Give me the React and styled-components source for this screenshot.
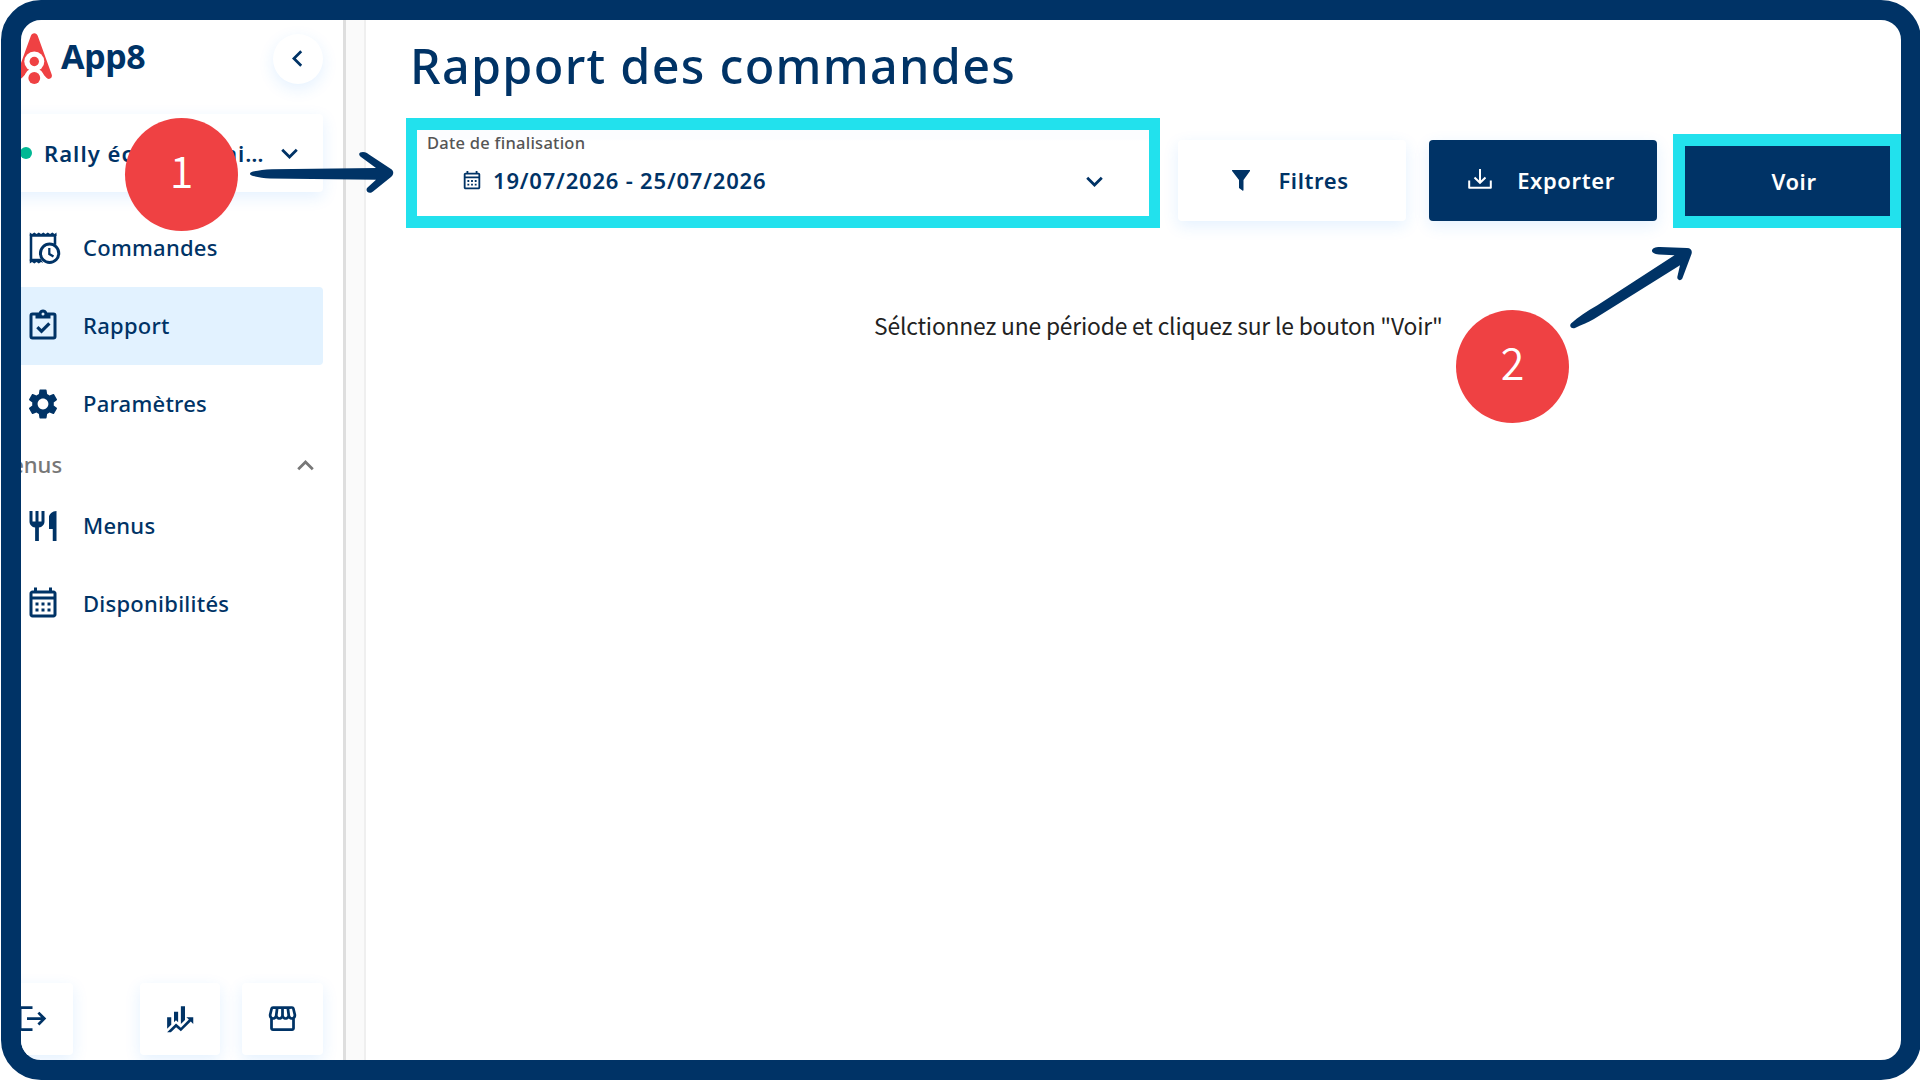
import styled, { createGlobalStyle, css } from "styled-components";
import {
    MdKeyboardArrowDown,
    MdKeyboardArrowLeft,
    MdKeyboardArrowUp,
    MdLogout,
    MdOutlineStorefront,
    MdRestaurant,
    MdSettings,
} from "react-icons/md";

const navy = "#003366";
const cyan = "#22e1ed";
const red = "#ef4143";
const softShadow = "0 5px 16px rgba(30, 140, 255, 0.12)";

const Global = createGlobalStyle`
    *{
        box-sizing: border-box;
    }

    body{
        margin: 0;
        background-color: white;
        color: ${navy};
        font-family: "Noto Sans", sans-serif;
        overflow: hidden;
    }

    svg{
        display: block;
        flex-shrink: 0;
    }
`;

const Page = styled.div`
    position: relative;
    width: 1920px;
    height: 1080px;
    padding-left: 1px;
    overflow: hidden;
`;

const Frame = styled.div`
    display: flex;
    width: 1920px;
    height: 1080px;
    border: 20px solid ${navy};
    border-radius: 40px;
    overflow: hidden;
`;

const Sidebar = styled.aside`
    display: flex;
    flex-direction: column;
    flex-shrink: 0;
    width: 376px;
    margin-left: -51px;
    padding: 11px 20.5px 5px 22px;
    border-right: 3px solid #dedede;
`;

const Gutter = styled.div`
    flex-shrink: 0;
    width: 20px;
    background-color: #fafafa;
    border-right: 2px solid #efefef;
`;

const Brand = styled.div`
    display: flex;
    align-items: center;
    height: 55px;
    margin-bottom: 28px;
    padding-left: 23px;

    h2{
        flex: 1;
        margin: 0 0 5px 7px;
        font-size: 34px;
        line-height: 40px;
        font-weight: 700;
        letter-spacing: -0.4px;
    }
`;

const RoundButton = styled.button`
    display: flex;
    align-items: center;
    justify-content: center;
    width: 50px;
    height: 50px;
    padding: 0 1px 0 0;
    border: none;
    border-radius: 50%;
    background-color: white;
    color: ${navy};
    box-shadow: ${softShadow};
`;

const Store = styled.div`
    display: flex;
    align-items: center;
    height: 78px;
    margin-bottom: 17px;
    padding: 0 17px 0 28px;
    border-radius: 4px;
    box-shadow: ${softShadow};

    .dot{
        width: 12px;
        height: 12px;
        margin-right: 12px;
        border-radius: 50%;
        background-color: #00b894;
    }

    .name{
        flex: 1;
        font-size: 22px;
        font-weight: 600;
        letter-spacing: 1.05px;
        white-space: nowrap;
    }
`;

const NavItem = styled.a`
    display: flex;
    align-items: center;
    height: 78px;
    padding: 0 0 1px 32.5px;
    border-radius: 4px;
    font-size: 22px;
    font-weight: 500;

    span{
        margin: 0 0 2px 22.500px;
        letter-spacing: 0.25px;
    }

    ${(p) => p.$active && css`
        background-color: #e2f2ff;
    `}
`;

const NavGroup = styled.div`
    display: flex;
    align-items: center;
    justify-content: space-between;
    height: 44px;
    padding-right: 1px;
    color: #777;
    font-size: 22px;
    font-weight: 500;

    span{
        margin: 0 0 2px -1px;
    }
`;

const Shortcuts = styled.div`
    display: flex;
    gap: 22px;
    margin-top: auto;
`;

const Shortcut = styled.button`
    display: flex;
    align-items: center;
    justify-content: center;
    width: 80.5px;
    height: 72px;
    padding: 0 0 1px;
    border: none;
    border-radius: 4px;
    background-color: white;
    color: ${navy};
    box-shadow: ${softShadow};

    &:first-child{
        margin-right: auto;
    }
`;

const Main = styled.main`
    flex: 1;
    padding-left: 40px;

    h1{
        margin: 14px 0 21px 4px;
        font-size: 48.5px;
        line-height: 63px;
        font-weight: 500;
        letter-spacing: 1.3px;
    }
`;

const Toolbar = styled.div`
    display: flex;
    align-items: flex-end;
    height: 110px;
`;

const Highlight = styled.div`
    border: solid ${cyan};
    border-width: 12px 11px;
`;

const DateField = styled(Highlight)`
    width: 754px;
    height: 110px;
    margin-right: 18px;
    padding: 2px 38px 0 10px;
    background: linear-gradient(#fcfdff 9px, white 11px);

    label{
        display: block;
        color: #555;
        font-size: 16.5px;
        line-height: 22px;
        font-weight: 500;
        letter-spacing: 0.25px;
    }
`;

const DateValue = styled.div`
    display: flex;
    align-items: center;
    height: 54px;
    padding-left: 34px;

    span{
        flex: 1;
        margin: 0 0 3px 10px;
        font-size: 22px;
        font-weight: 600;
        letter-spacing: 0.8px;
    }
`;

const Button = styled.button`
    display: flex;
    align-items: center;
    justify-content: center;
    width: ${(p) => p.$width}px;
    height: 81px;
    margin: 0 ${(p) => p.$gap}px 7px 0;
    padding: 0 3px 1px 0;
    border: none;
    border-radius: 4px;
    background-color: ${(p) => (p.$primary ? navy : "white")};
    color: ${(p) => (p.$primary ? "white" : navy)};
    box-shadow: ${softShadow};
    font: 600 22px "Noto Sans", sans-serif;
    letter-spacing: 0.6px;
`;

const ViewButton = styled(Highlight)`
    display: flex;
    align-items: center;
    justify-content: center;
    width: 229px;
    height: 94px;
    padding: 0 0 1px 13px;
    border-width: 12px;
    background-color: ${navy};
    color: white;
    font-size: 22px;
    font-weight: 600;
    letter-spacing: 0.6px;
`;

const Message = styled.p`
    margin: 81px 0 0 468px;
    color: #222;
    font-family: "Noto Sans CJK JP", sans-serif;
    font-size: 22.8px;
    line-height: 34px;
    letter-spacing: -0.17px;
    white-space: nowrap;
`;

const Step = styled.div`
    position: absolute;
    left: ${(p) => p.$x}px;
    top: ${(p) => p.$y}px;
    display: flex;
    align-items: center;
    justify-content: center;
    width: 113px;
    height: 113px;
    padding-bottom: 10px;
    border-radius: 50%;
    background-color: ${red};
    color: white;
    font-family: "Noto Sans CJK JP", sans-serif;
    font-size: 43px;
    font-weight: 350;
    line-height: 1;
`;

const Arrows = styled.svg`
    position: absolute;
    left: 0;
    top: 0;
    fill: ${navy};
    pointer-events: none;
`;

const Icon = ({ d, size = 36 }) => (
    <svg width={size} height={size} viewBox="0 0 24 24" fill="currentColor">
        <path d={d} />
    </svg>
)

const paths = {
    clipboard: "M19,3H14.82C14.4,1.84 13.3,1 12,1C10.7,1 9.6,1.84 9.18,3H5A2,2 0 0,0 3,5V19A2,2 0 0,0 5,21H19A2,2 0 0,0 21,19V5A2,2 0 0,0 19,3M12,3A1,1 0 0,1 13,4A1,1 0 0,1 12,5A1,1 0 0,1 11,4A1,1 0 0,1 12,3M7,7H17V5H19V19H5V5H7V7M7.5,13.5L9,12L11,14L15.5,9.5L17,11L11,17L7.5,13.5Z",
    calendar: "M7 11H9V13H7V11M21 5V19C21 20.11 20.11 21 19 21H5C3.89 21 3 20.1 3 19V5C3 3.9 3.9 3 5 3H6V1H8V3H16V1H18V3H19C20.11 3 21 3.9 21 5M5 19H19V9H5V19M5 7H19V5H5V7M15 13V11H17V13H15M11 13V11H13V13H11M7 15H9V17H7V15M15 17V15H17V17H15M11 17V15H13V17H11Z",
    finance: "M6,16.5L3,19.44V11H6M11,14.66L9.43,13.32L8,14.64V7H11M16,13L13,16V3H16M18.81,12.81L17,11H22V16L20.21,14.21L13,21.36L9.53,18.34L5.75,22H3L9.47,15.66L13,18.64",
};

const Logo = () => (
    <svg width="39" height="52" viewBox="0 0 39 52">
        <path fill={red} d="M19.3 0.3c1.7 0 2.8 1 3.4 2.5l14 38.6c1.2 3.6-2.4 5.8-5 3.6L27 40H11.6l-4.7 5c-2.6 2.2-6.2 0-5-3.6L15.9 2.8c.6-1.5 1.7-2.5 3.400-2.500z" />
        <circle cx="19.3" cy="45" r="10" fill="white" />
        <circle cx="19.3" cy="28.5" r="10" fill="white" />
        <circle cx="19.3" cy="28.5" r="4.7" fill={red} />
        <circle cx="19.3" cy="45" r="5.9" fill={red} />
    </svg>
)

const OrdersIcon = () => (
    <svg width="36" height="36" viewBox="0 0 24 24" fill="none" stroke="currentColor">
        <path strokeWidth="1.7" d="M10.5 20H4V3.6h16v6.2" />
        <path fill="currentColor" stroke="none" d="M3.2 4V1.6l1.5 1 1.5-1 1.5 1 1.5-1 1.5 1 1.5-1 1.5 1 1.5-1 1.5 1 1.5-1 1.5 1 1.3-1V4zM3.2 19.5v2.9l1.5-1 1.5 1 1.5-1 1.5 1 1.5-1 1.5.6-1.700-2.500z" />
        <circle cx="16.4" cy="15.5" r="6.1" strokeWidth="2" />
        <path strokeWidth="1.5" d="M16.2 12v4l2.8 1.7" />
    </svg>
)

const Funnel = () => (
    <svg width="18" height="21" viewBox="0 0 18 21" fill="currentColor">
        <path d="M0.6 0h17c.6 0 .7.7.4 1.1L11.5 10v10c0 .8-.6 1-1.1.6L7 18V10L0.1 1.100C-.2.6 0 0 .6 0z" />
    </svg>
)

const Download = () => (
    <svg width="24" height="21" viewBox="0 0 24 21" fill="none" stroke="currentColor" strokeWidth="2">
        <path d="M1.2 11.5V18.7H22.8V11.5" strokeLinejoin="round" />
        <path d="M12 0v13.5M6.5 8.5l5.5 5.3 5.5-5.3" />
    </svg>
)

const IconGap = styled.span`
    display: flex;
    margin: ${(p) => p.$margin};
`;

const App = () => {
    return(
        <Page>
            <Global />
            <Frame>
                <Sidebar>
                    <Brand>
                        <Logo />
                        <h2>App8</h2>
                        <RoundButton><MdKeyboardArrowLeft size={33} /></RoundButton>
                    </Brand>

                    <Store>
                        <div className="dot"></div>
                        <div className="name">Rally école semai…</div>
                        <MdKeyboardArrowDown size={33} />
                    </Store>

                    <NavItem><OrdersIcon /><span>Commandes</span></NavItem>
                    <NavItem $active><Icon d={paths.clipboard} /><span>Rapport</span></NavItem>
                    <NavItem><MdSettings size={36} /><span>Paramètres</span></NavItem>

                    <NavGroup>
                        <span>Menus</span>
                        <MdKeyboardArrowUp size={33} />
                    </NavGroup>

                    <NavItem><MdRestaurant size={36} /><span>Menus</span></NavItem>
                    <NavItem><Icon d={paths.calendar} /><span>Disponibilités</span></NavItem>

                    <Shortcuts>
                        <Shortcut><MdLogout size={33} /></Shortcut>
                        <Shortcut><Icon d={paths.finance} size={33} /></Shortcut>
                        <Shortcut><MdOutlineStorefront size={33} /></Shortcut>
                    </Shortcuts>
                </Sidebar>

                <Gutter />

                <Main>
                    <h1>Rapport des commandes</h1>

                    <Toolbar>
                        <DateField>
                            <label>Date de finalisation</label>
                            <DateValue>
                                <Icon d={paths.calendar} size={22} />
                                <span>19/07/2026 - 25/07/2026</span>
                                <MdKeyboardArrowDown size={33} />
                            </DateValue>
                        </DateField>
                        <Button $width={228} $gap={23}>
                            <IconGap $margin="0 28px 0 0"><Funnel /></IconGap>
                            Filtres
                        </Button>
                        <Button $primary $width={228} $gap={16}>
                            <IconGap $margin="0 25px 2px 0"><Download /></IconGap>
                            Exporter
                        </Button>
                        <ViewButton>Voir</ViewButton>
                    </Toolbar>

                    <Message>Sélctionnez une période et cliquez sur le bouton "Voir"</Message>
                </Main>
            </Frame>

            <Step $x={125} $y={118}>1</Step>
            <Step $x={1456} $y={310}>2</Step>

            <Arrows width="1920" height="1080" viewBox="0 0 1920 1080">
                <path d="M253 171.5C258 170.5 264 169.5 272 169.2L376 168L361 157C357.5 154 359.5 152 363 152C366 152 367 153 369 154.5L391 169C394 171 394 174.5 391 177L373 191.5C370 194.5 365 192 367 188L376 179.8L270 178.5C264 178.3 258 177 253 176C249 175 249 172.5 253 171.5Z" />
                <path d="M1571 323.5C1578 317 1587 311 1597 305.5L1674.5 255.3L1659 254.5C1654 254 1652 252.5 1652 250.8C1652 248.5 1655 247 1660 247L1687 248C1691 248.2 1692.5 250.5 1691.5 254L1682.5 278C1681.5 281 1677 281 1677.3 277L1680 265.2L1594 319C1588 322.5 1581 325 1575 328C1571 329 1569 326 1571 323.5Z" />
            </Arrows>
        </Page>
    )
}

export default App;
